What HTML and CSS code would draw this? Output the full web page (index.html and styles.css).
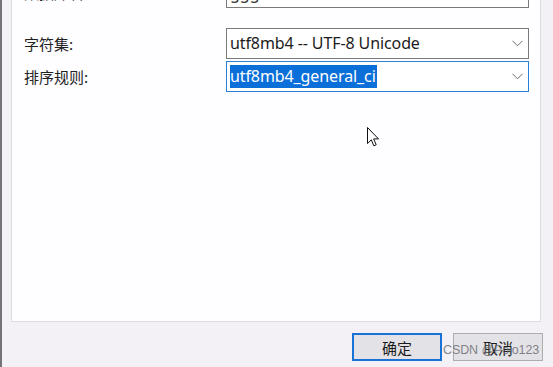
FILE: index.html
```html
<!DOCTYPE html>
<html lang="zh-CN">
<head>
    <meta charset="UTF-8">
    <meta name="viewport" content="width=device-width, initial-scale=1.0">
    <title>新建数据库</title>
    <link rel="stylesheet" href="styles.css">
</head>
<body>
    <div class="window">
        <div class="panel">
            <div class="form-row first">
                <label class="form-label">数据库名:</label>
                <div class="field input-box">ggg</div>
            </div>
            <div class="form-row">
                <label class="form-label">字符集:</label>
                <div class="field select-box">
                    <span class="value">utf8mb4 -- UTF-8 Unicode</span>
                    <svg class="chevron" width="11" height="7" viewBox="0 0 11 7"><path d="M0.5 0.8 L5.5 5.8 L10.5 0.8" fill="none" stroke="#6a6a6a" stroke-width="1"/></svg>
                </div>
            </div>
            <div class="form-row">
                <label class="form-label">排序规则:</label>
                <div class="field select-box focused">
                    <span class="value selected">utf8mb4_general_ci</span>
                    <svg class="chevron" width="11" height="7" viewBox="0 0 11 7"><path d="M0.5 0.8 L5.5 5.8 L10.5 0.8" fill="none" stroke="#6a6a6a" stroke-width="1"/></svg>
                </div>
            </div>
        </div>
        <div class="button-bar">
            <button class="btn primary">确定</button>
            <button class="btn">取消</button>
        </div>

        <!-- mouse pointer and watermark sit on top of the dialog -->
        <svg class="cursor" width="13" height="21" viewBox="0 0 13 21">
            <path d="M0.5 0.5 L0.5 16.5 L4.3 12.8 L6.8 18.8 L9.2 17.8 L6.7 11.9 L11.5 11.9 Z" fill="#fff" stroke="#111" stroke-width="1" stroke-linejoin="miter"/>
        </svg>
        <div class="watermark">CSDN @Pojo123</div>
    </div>
</body>
</html>
```

FILE: styles.css
```css
/* Base */
* {
    margin: 0;
    padding: 0;
    box-sizing: border-box;
}
body {
    font-family: "Noto Sans", "Noto Sans CJK SC", sans-serif;
    background: #f3f1f5;
    color: #1b1b1b;
    overflow: hidden;
}
/* Dialog window */
.window {
    position: relative;
    height: 367px;
    overflow: hidden;
    border-left: 2px solid #75727a;
    padding-left: 9px;
}
.panel {
    width: 530px;
    height: 362px;
    margin-top: -40px;
    padding: 16px 11px 0 12px;
    background: #fefdff;
    border: 1px solid #dddbe0;
}
/* Form rows */
.form-row {
    display: grid;
    grid-template-columns: 202px 303px;
    align-items: center;
    height: 31px;
    margin-bottom: 2px;
}
.form-row.first {
    margin-bottom: 20px;
}
.form-label {
    font-family: "Noto Sans CJK SC", sans-serif;
    font-size: 15px;
    color: #222;
}
.field {
    height: 31px;
    border: 1px solid #7a7a7a;
    background: #fff;
    display: flex;
    align-items: center;
    padding-left: 3px;
    font-size: 16px;
}
.input-box {
    color: #333;
}
.select-box {
    justify-content: space-between;
    padding-right: 4px;
}
.select-box.focused {
    border-color: #2a7fd6;
}
.value {
    line-height: 23px;
    white-space: nowrap;
    letter-spacing: -0.1px;
}
.value.selected {
    background: #0a6fd8;
    color: #fff;
    padding-right: 1px;
}
.chevron {
    margin-right: 1px;
}
/* Buttons */
.button-bar {
    display: flex;
    justify-content: flex-end;
    gap: 11px;
    margin-top: 11px;
    padding-right: 10px;
}
.btn {
    width: 90px;
    height: 28px;
    font-family: "Noto Sans CJK SC", sans-serif;
    font-size: 15px;
    color: #1b1b1b;
    background: #e3e2e6;
    border: 1px solid #adadb0;
}
.btn.primary {
    border: 2px solid #1a72d4;
}
/* Overlays */
.cursor {
    position: absolute;
    left: 365px;
    top: 127px;
}
.watermark {
    position: absolute;
    left: 441px;
    top: 343px;
    font-family: "Liberation Sans", sans-serif;
    font-size: 12.5px;
    color: rgba(110, 110, 115, 0.85);
    letter-spacing: -0.1px;
}
```
